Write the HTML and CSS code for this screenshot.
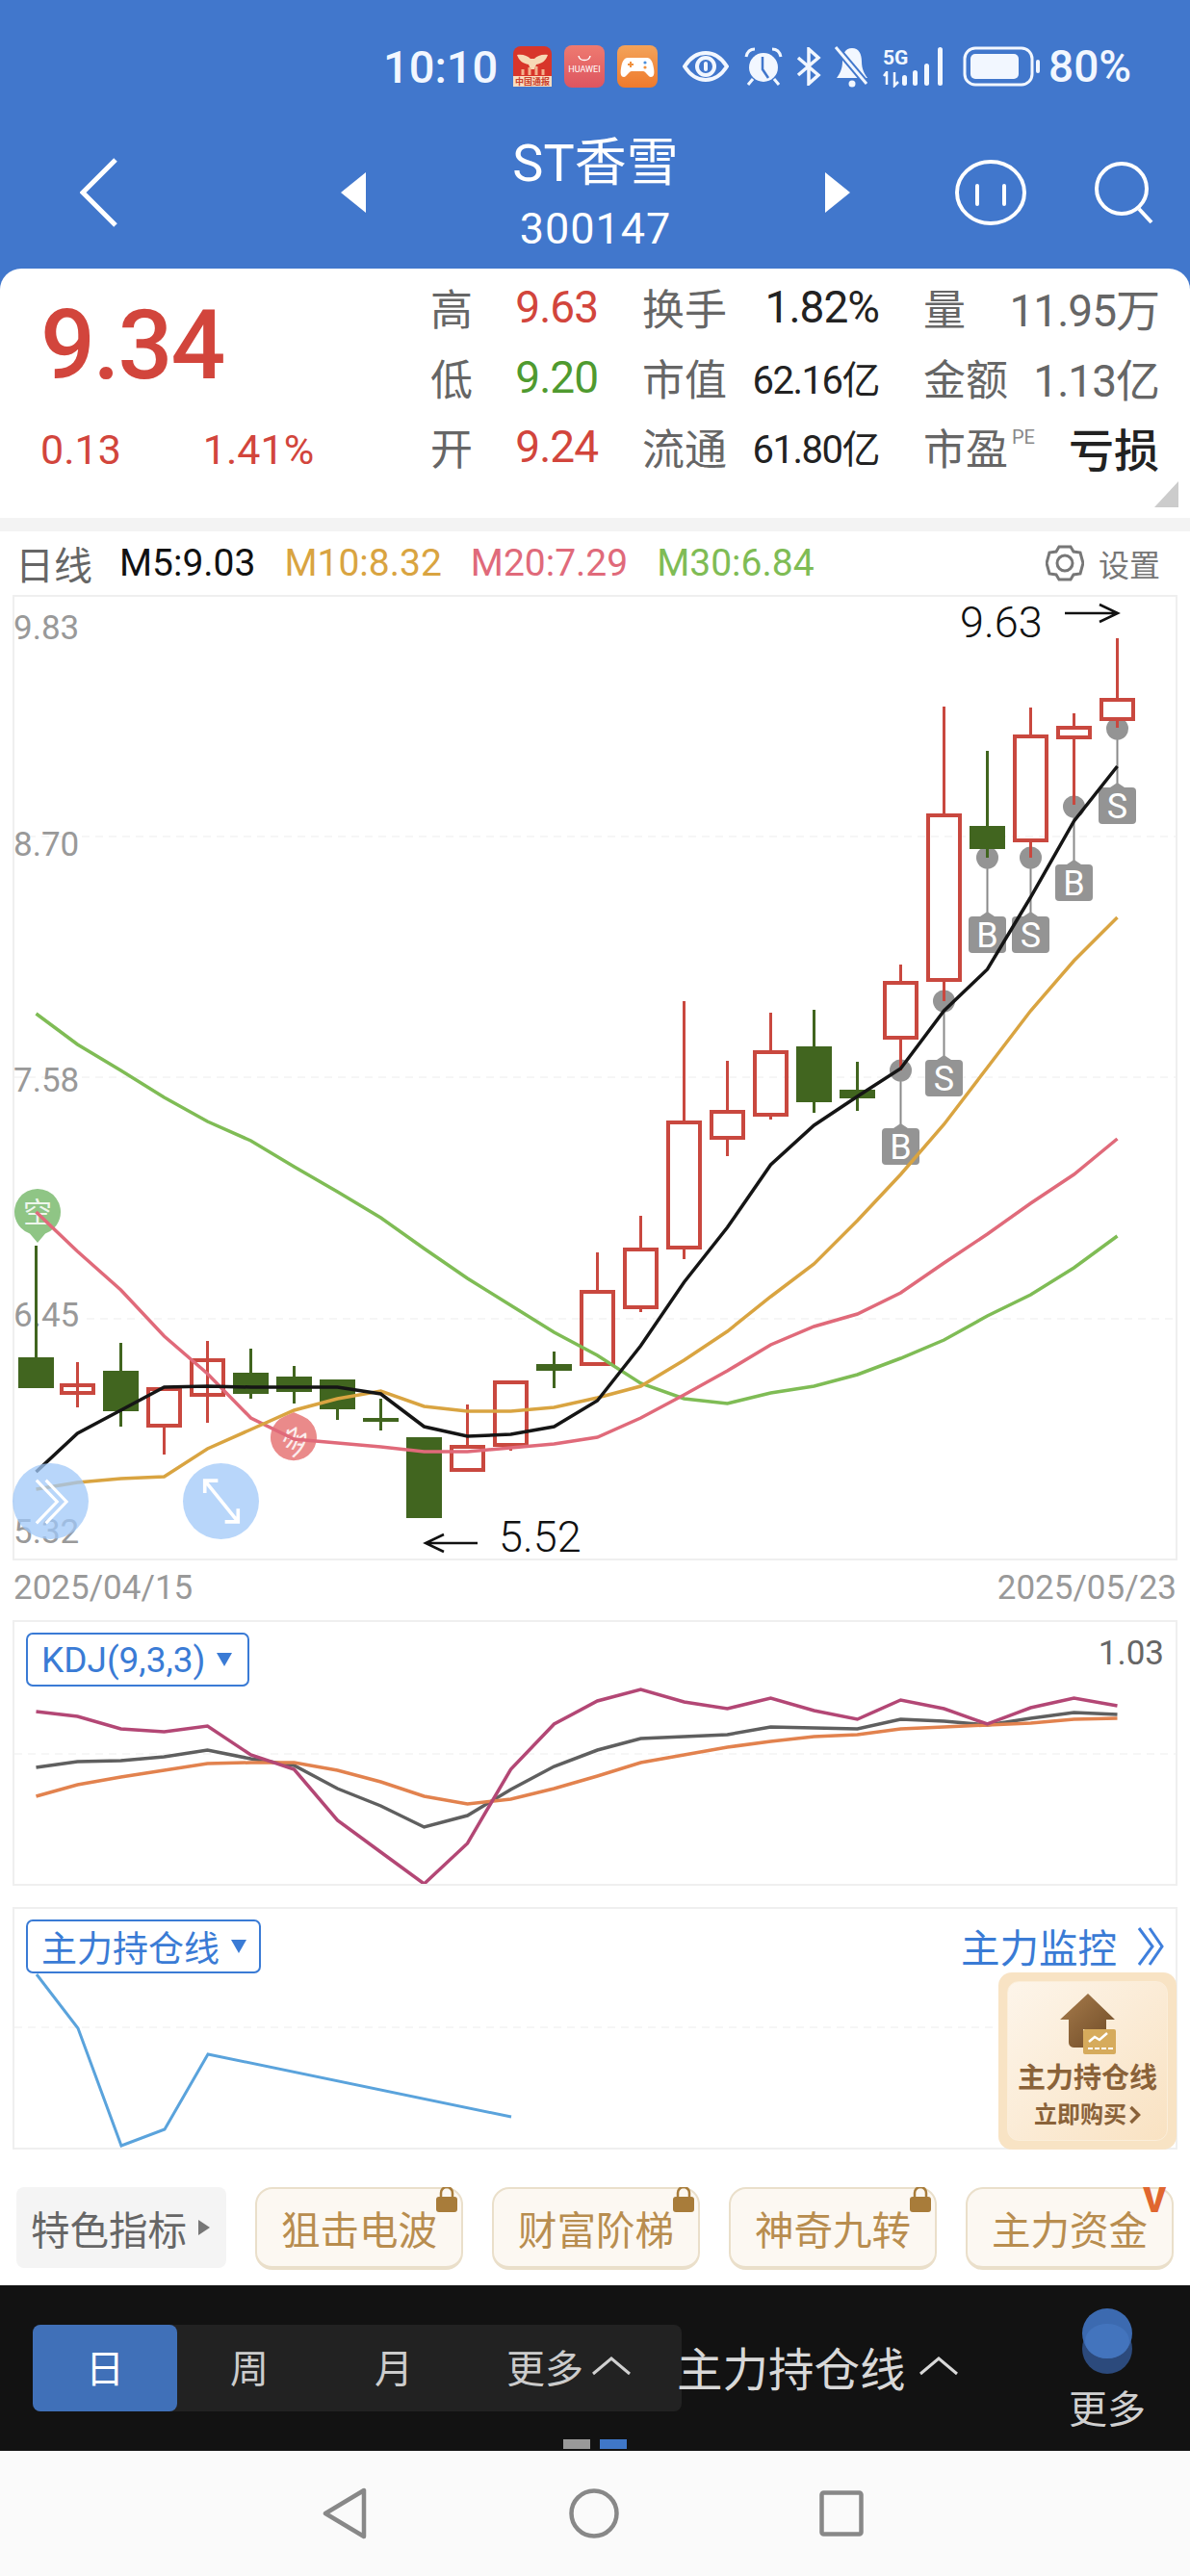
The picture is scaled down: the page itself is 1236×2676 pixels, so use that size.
FILE: index.html
```html
<!DOCTYPE html>
<html lang="zh-CN">
<head>
  <meta charset="UTF-8" />
  <meta name="viewport" content="width=device-width, initial-scale=1.0"/>
  <title>ST香雪 - 300147</title>
  <link rel="stylesheet" href="styles.css">
</head>
<body>
  <div class="top">
    <div class="status">
      <span class="clock">10:10</span>
      <svg class="app-red" viewBox="0 0 40 42">
        <rect width="40" height="42" rx="8" fill="#d8352a"/>
        <path d="M4 9c6-1 11 1 14 4h4c3-3 8-5 14-4-2 6-6 9-12 10l-2 5h-4l-2-5C10 18 6 15 4 9z" fill="#f7d9b5"/>
        <path d="M10 30v-6M17 30v-8M24 30v-9M31 30v-6" stroke="#f4b18c" stroke-width="3"/>
        <rect y="31" width="40" height="11" fill="#fbdcbf"/>
        <text class="app-tag" x="20" y="40">中国通报</text>
      </svg>
      <svg class="app-sq" viewBox="0 0 42 44">
        <defs><linearGradient id="hw" x1="0" y1="0" x2="0" y2="1"><stop offset="0" stop-color="#ee7a70"/><stop offset="1" stop-color="#dd5560"/></linearGradient></defs>
        <rect width="42" height="44" rx="8" fill="url(#hw)"/>
        <path d="M15 11c1 6 11 6 12 0" fill="none" stroke="#fff" stroke-width="1.5"/>
        <text class="app-hw" x="21" y="28">HUAWEI</text>
      </svg>
      <svg class="app-sq" viewBox="0 0 42 44">
        <defs><linearGradient id="gm" x1="0" y1="0" x2="0" y2="1"><stop offset="0" stop-color="#f3a35a"/><stop offset="1" stop-color="#ef7a2c"/></linearGradient></defs>
        <rect width="42" height="44" rx="8" fill="url(#gm)"/>
        <path d="M11 13h20c4 0 6 4 7 11 1 6 0 9-3 9-3 0-5-6-8-6H15c-3 0-5 6-8 6-3 0-4-3-3-9 1-7 3-11 7-11z" fill="#fff"/>
        <path d="M11 20h6M14 17v6" stroke="#f0913f" stroke-width="2"/>
        <circle cx="29" cy="18" r="1.6" fill="#4a8fdc"/><circle cx="29" cy="23" r="1.6" fill="#f0913f"/>
      </svg>
      <svg class="ic-eye" viewBox="0 0 48 32">
        <path d="M2 16C9 5 16 2 24 2s15 3 22 14c-7 11-14 14-22 14S9 27 2 16z" fill="none" stroke="#f2f7ff" stroke-width="4"/>
        <circle cx="24" cy="16" r="9" fill="none" stroke="#f2f7ff" stroke-width="4"/>
        <rect x="22" y="11" width="4" height="10" rx="2" fill="#f2f7ff"/>
      </svg>
      <svg class="ic-alarm" viewBox="0 0 40 40">
        <circle cx="20" cy="21" r="15" fill="#f2f7ff"/>
        <path d="M19 10v13l6 9" fill="none" stroke="#4177cc" stroke-width="2.5"/>
        <path d="M2 10C3 5 6 2 11 2M38 10c-1-5-4-8-9-8M9 33l-5 6M31 33l5 6" fill="none" stroke="#f2f7ff" stroke-width="3"/>
      </svg>
      <svg class="ic-bt" viewBox="0 0 28 40">
        <path d="M3 11L24 29 14 38V2l10 9L3 29" fill="none" stroke="#f2f7ff" stroke-width="3.5"/>
      </svg>
      <svg class="ic-bell" viewBox="0 0 38 44">
        <path d="M19 3c7 0 10 6 10 14 0 8 3 13 6 17H3c3-4 6-9 6-17C9 9 12 3 19 3z" fill="#f2f7ff"/>
        <path d="M2 2l32 38" stroke="#4177cc" stroke-width="7"/>
        <path d="M2 2l32 38" stroke="#f2f7ff" stroke-width="3"/>
        <circle cx="19" cy="40" r="3.5" fill="#f2f7ff"/>
      </svg>
      <svg class="ic-signal" viewBox="0 0 68 44">
        <text class="ic-5g" x="0" y="20">5G</text>
        <path d="M4 28l-3 4M4 27v14M12 28v14l4-4" fill="none" stroke="#f2f7ff" stroke-width="2.5"/>
        <rect x="20" y="31" width="5" height="11" rx="2.5" fill="#f2f7ff"/>
        <rect x="31" y="26" width="5" height="16" rx="2.5" fill="#f2f7ff"/>
        <rect x="43" y="19" width="5" height="23" rx="2.5" fill="#f2f7ff"/>
        <rect x="57" y="2" width="5" height="40" rx="2.5" fill="#f2f7ff"/>
      </svg>
      <svg class="ic-batt" viewBox="0 0 82 42">
        <rect x="2" y="2" width="70" height="38" rx="11" fill="none" stroke="#f2f7ff" stroke-width="3"/>
        <rect x="8" y="8" width="50" height="26" rx="5" fill="#f2f7ff"/>
        <rect x="76" y="14" width="4" height="14" rx="2" fill="#f2f7ff"/>
      </svg>
      <span class="batt-pct">80%</span>
    </div>

    <div class="nav">
      <svg class="nav-back" viewBox="0 0 40 72"><path d="M37 2L3 36l34 34" fill="none" stroke="#fff" stroke-width="5"/></svg>
      <svg class="nav-tri" viewBox="0 0 26 42"><path d="M26 0v42L0 21z" fill="#fff"/></svg>
      <div class="nav-title">
        <div class="nav-name">ST香雪</div>
        <div class="nav-code">300147</div>
      </div>
      <svg class="nav-tri" viewBox="0 0 26 42"><path d="M0 0v42l26-21z" fill="#fff"/></svg>
      <svg class="nav-face" viewBox="0 0 74 68">
        <ellipse cx="37" cy="34" rx="35" ry="32" fill="none" stroke="#fff" stroke-width="4"/>
        <path d="M23 27v19M51 27v19" stroke="#fff" stroke-width="4" stroke-linecap="round"/>
      </svg>
      <svg class="nav-search" viewBox="0 0 64 66">
        <circle cx="29" cy="29" r="26" fill="none" stroke="#fff" stroke-width="4"/>
        <path d="M47 50l13 14" stroke="#fff" stroke-width="4"/>
      </svg>
    </div>

    <div class="quote">
      <div class="quote-main">
        <div class="price">9.34</div>
        <div class="price-sub"><span>0.13</span><span>1.41%</span></div>
      </div>
      <div class="stats">
        <span class="lab">高</span><span class="val red">9.63</span>
        <span class="lab mid">换手</span><span class="val">1.82%</span>
        <span class="lab mid">量</span><span class="val dim">11.95万</span>

        <span class="lab">低</span><span class="val green">9.20</span>
        <span class="lab mid">市值</span><span class="val small">62.16亿</span>
        <span class="lab mid">金额</span><span class="val dim">1.13亿</span>

        <span class="lab">开</span><span class="val red">9.24</span>
        <span class="lab mid">流通</span><span class="val small">61.80亿</span>
        <span class="lab mid">市盈<sup class="pe">PE</sup></span><span class="val loss">亏损</span>
      </div>
      <div class="corner"></div>
    </div>
  </div>

  <div class="ma-row">
    <span class="ma-title">日线</span>
    <span class="ma m5">M5:9.03</span>
    <span class="ma m10">M10:8.32</span>
    <span class="ma m20">M20:7.29</span>
    <span class="ma m30">M30:6.84</span>
    <span class="ma-set">
      <svg viewBox="0 0 40 40"><path d="M14 3h12l3 5 7 1 3 11-3 11-7 1-3 5H14l-3-5-7-1-3-11 3-11 7-1z" fill="none" stroke="#777" stroke-width="3"/><circle cx="20" cy="20" r="8" fill="none" stroke="#777" stroke-width="3"/></svg>
      设置
    </span>
  </div>

  <div class="kline">
    <svg class="kline-svg" viewBox="15 620 1206 999">
      <path class="grid-line" d="M15 869H1221M15 1119H1221M90 1370H1221"/>

      <text class="axis" x="14" y="664">9.83</text>
      <text class="axis" x="14" y="889">8.70</text>
      <text class="axis" x="14" y="1134">7.58</text>
      <text class="axis" x="14" y="1378">6.45</text>

      <!-- buy / sell marks -->
      <g class="mark">
        <path class="mark-line" d="M935.5 1112V1172M980.5 1040V1101M1025.5 891V952M1070.5 891V952M1115.5 838V898M1160.5 757V818"/>
        <circle cx="935.5" cy="1112" r="11.5"/><circle cx="980.5" cy="1040" r="11.5"/><circle cx="1025.5" cy="891" r="11.5"/>
        <circle cx="1070.5" cy="891" r="11.5"/><circle cx="1115.5" cy="838" r="11.5"/><circle cx="1160.5" cy="757" r="11.5"/>
        <path d="M928 1172l7.500-5 7.500 5zM973 1101l7.500-5 7.500 5zM1018 952l7.500-5 7.500 5zM1063 952l7.500-5 7.500 5zM1108 898l7.500-5 7.500 5zM1153 818l7.500-5 7.500 5z"/>
        <rect x="916" y="1172" width="39" height="38" rx="4"/><rect x="961" y="1101" width="39" height="38" rx="4"/>
        <rect x="1006" y="952" width="39" height="38" rx="4"/><rect x="1051" y="952" width="39" height="38" rx="4"/>
        <rect x="1096" y="898" width="39" height="38" rx="4"/><rect x="1141" y="818" width="39" height="38" rx="4"/>
      </g>
      <text class="mark-text" x="935.500" y="1204">B</text>
      <text class="mark-text" x="980.500" y="1133">S</text>
      <text class="mark-text" x="1025.500" y="984">B</text>
      <text class="mark-text" x="1070.500" y="984">S</text>
      <text class="mark-text" x="1115.500" y="930">B</text>
      <text class="mark-text" x="1160.500" y="850">S</text>

      <!-- candles going down -->
      <g class="fall">
        <path d="M37.500 1294V1410M125.500 1395V1482M260.500 1401V1453M305.500 1419V1458M350.500 1433V1475M395.500 1453V1486M575.500 1404V1442M845.500 1049V1156M890.500 1103V1154M1025.500 780V891"/>
        <rect x="19" y="1410" width="37" height="32"/>
        <rect x="107" y="1424" width="37" height="42"/>
        <rect x="242" y="1426" width="37" height="22"/>
        <rect x="287" y="1430" width="37" height="16"/>
        <rect x="332" y="1433" width="37" height="31"/>
        <rect x="377" y="1473" width="37" height="4"/>
        <rect x="422" y="1493" width="37" height="84"/>
        <rect x="557" y="1417" width="37" height="7"/>
        <rect x="827" y="1087" width="37" height="58"/>
        <rect x="872" y="1132" width="37" height="9"/>
        <rect x="1007" y="858" width="37" height="24"/>
      </g>

      <!-- candles going up -->
      <g class="rise">
        <path d="M80.500 1415V1462M170.500 1482V1511M215.500 1393V1478M485.500 1459V1503M530.500 1500V1507M620.500 1301V1340M665.500 1263V1296M665.500 1358V1363M710.500 1040V1164M710.500 1296V1308M755.500 1102V1153M755.500 1182V1201M800.500 1052V1091M800.500 1158V1163M935.500 1002V1019M935.500 1078V1112M980.500 734V845M980.500 1018V1040M1070.500 735V763M1070.500 873V891M1115.500 741V754M1115.500 766V836M1160.500 663V725M1160.500 747V756"/>
        <rect x="64" y="1439" width="33" height="8"/>
        <rect x="154" y="1443" width="33" height="38"/>
        <rect x="199" y="1413" width="33" height="36"/>
        <rect x="469" y="1503" width="33" height="24"/>
        <rect x="514" y="1436" width="33" height="65"/>
        <rect x="604" y="1342" width="33" height="75"/>
        <rect x="649" y="1298" width="33" height="60"/>
        <rect x="694" y="1166" width="33" height="130"/>
        <rect x="739" y="1155" width="33" height="27"/>
        <rect x="784" y="1093" width="33" height="65"/>
        <rect x="919" y="1021" width="33" height="57"/>
        <rect x="964" y="847" width="33" height="171"/>
        <rect x="1054" y="765" width="33" height="108"/>
        <rect x="1099" y="756" width="33" height="10"/>
        <rect x="1144" y="727" width="33" height="20"/>
      </g>

      <!-- signal pins -->
      <path class="pin-short" d="M39 1291l-8-9.400a24 24 0 1 1 16 0z"/>
      <text class="pin-text" x="39" y="1270">空</text>
      <path class="pin-long" d="M305 1467l9 4a24 24 0 1 1-18 0z"/>
      <text class="pin-text" x="305" y="1508" transform="rotate(-35 305 1493)">多</text>

      <polyline class="ma-line l30" points="37.500,1053 80.500,1085 125.500,1112 170.500,1140 215.500,1165 260.500,1185 305.500,1212 350.500,1238 395.500,1265 440.500,1297 485.500,1328 530.500,1356 575.500,1384 620.500,1408 665.500,1437 710.500,1453 755.500,1458 800.500,1447 845.500,1440 890.500,1428 935.500,1411 980.500,1392 1025.500,1367 1070.500,1345 1115.500,1317 1160.500,1284"/>
      <polyline class="ma-line l20" points="37.500,1259 80.500,1300 125.500,1340 170.500,1388 215.500,1427 260.500,1473 305.500,1495 350.500,1499 395.500,1503 440.500,1508 485.500,1508 530.500,1504 575.500,1500 620.500,1493 665.500,1473 710.500,1449 755.500,1424 800.500,1397 845.500,1378 890.500,1365 935.500,1343 980.500,1312 1025.500,1282 1070.500,1250 1115.500,1220 1160.500,1183"/>
      <polyline class="ma-line l10" points="37.500,1547 80.500,1540 125.500,1536 170.500,1534 215.500,1505 260.500,1485 305.500,1465 350.500,1453 395.500,1445 440.500,1461 485.500,1466 530.500,1466 575.500,1462 620.500,1452 665.500,1440 710.500,1413 755.500,1383 800.500,1347 845.500,1313 890.500,1268 935.500,1220 980.500,1168 1025.500,1109 1070.500,1050 1115.500,998 1160.500,953"/>
      <polyline class="ma-line l5" points="37.500,1529 80.500,1489 125.500,1465 170.500,1441 215.500,1440 260.500,1441 305.500,1441 350.500,1441 395.500,1448 440.500,1482 485.500,1492 530.500,1490 575.500,1482 620.500,1455 665.500,1398 710.500,1332 755.500,1275 800.500,1210 845.500,1169 890.500,1139 935.500,1110 980.500,1050 1025.500,1007 1070.500,932 1115.500,853 1160.500,796"/>

      <text class="peak" x="997" y="662">9.63</text>
      <path class="peak-arrow" d="M1106 637H1160M1142 628l19 9-19 9"/>
      <path class="peak-arrow" d="M496 1603H442M461 1594l-19 9 19 9"/>
      <text class="peak" x="518" y="1612">5.52</text>

      <text class="axis" x="14" y="1603">5.32</text>
    </svg>
    <div class="float-btn btn-left">
      <svg viewBox="0 0 40 56"><path d="M3 3l24 25L3 53M14 3l24 25-24 25" fill="none" stroke="#fff" stroke-width="3.500"/></svg>
    </div>
    <div class="float-btn btn-right">
      <svg viewBox="0 0 44 52"><path d="M3 2l38 47M3 16V2h15M41 34v15H26" fill="none" stroke="#fff" stroke-width="4"/></svg>
    </div>
  </div>

  <div class="dates"><span>2025/04/15</span><span>2025/05/23</span></div>

  <div class="panel panel-kdj">
    <svg class="panel-svg" viewBox="15 1685 1206 272">
      <path class="grid-line" d="M15 1822H1221"/>
      <polyline class="kdj l-k" points="37.500,1836 80.500,1830 125.500,1829 170.500,1825 215.500,1818 260.500,1827 305.500,1834 350.500,1858 395.500,1876 440.500,1898 485.500,1886 530.500,1859 575.500,1835 620.500,1818 665.500,1806 710.500,1804 755.500,1802 800.500,1794 845.500,1795 890.500,1796 935.500,1786 980.500,1788 1025.500,1792 1070.500,1785 1115.500,1779 1160.500,1781"/>
      <polyline class="kdj l-d" points="37.500,1866 80.500,1854 125.500,1846 170.500,1839 215.500,1832 260.500,1831 305.500,1831 350.500,1839 395.500,1851 440.500,1866 485.500,1874 530.500,1869 575.500,1858 620.500,1845 665.500,1831 710.500,1823 755.500,1815 800.500,1809 845.500,1804 890.500,1802 935.500,1796 980.500,1794 1025.500,1792 1070.500,1790 1115.500,1786 1160.500,1785"/>
      <polyline class="kdj l-j" points="37.500,1778 80.500,1783 125.500,1796 170.500,1799 215.500,1793 260.500,1823 305.500,1838 350.500,1891 395.500,1924 440.500,1957 485.500,1915 530.500,1838 575.500,1791 620.500,1767 665.500,1755 710.500,1768 755.500,1775 800.500,1764 845.500,1777 890.500,1786 935.500,1766 980.500,1775 1025.500,1791 1070.500,1774 1115.500,1764 1160.500,1772"/>
    </svg>
    <div class="pick pick-kdj">KDJ(9,3,3)<i class="pick-tri"></i></div>
    <div class="panel-val">1.03</div>
  </div>

  <div class="panel panel-hold">
    <svg class="panel-svg" viewBox="15 1983 1206 248">
      <path class="grid-line" d="M15 2106H1040"/>
      <polyline class="hold-line" points="38,2051 81,2107 126,2229 171,2212 216,2134 531,2199"/>
    </svg>
    <div class="pick pick-hold">主力持仓线<i class="pick-tri"></i></div>
    <div class="hold-link">主力监控
      <svg viewBox="0 0 30 44"><path d="M3 3l14 19L3 41M14 3l13 19-13 19" fill="none" stroke="#3f7fdc" stroke-width="3"/></svg>
    </div>
    <div class="promo">
      <div class="promo-in">
        <svg class="promo-house" viewBox="0 0 58 64">
          <defs><linearGradient id="hs" x1="0" y1="0" x2="1" y2="1"><stop offset="0" stop-color="#a87c4c"/><stop offset="1" stop-color="#6d4a26"/></linearGradient></defs>
          <path d="M29 0l28 27H48v10H24v19h-8c-5 0-7-2-7-6V27H0z" fill="url(#hs)"/>
          <rect x="24" y="37" width="34" height="26" rx="2" fill="#d6ab5c"/>
          <path d="M30 50l6-5 5 3 8-7" fill="none" stroke="#fff" stroke-width="2.500"/>
          <path d="M29 57h26" stroke="#fff" stroke-width="2" stroke-dasharray="5 2"/>
        </svg>
        <div class="promo-title">主力持仓线</div>
        <div class="promo-buy">立即购买 <svg viewBox="0 0 12 20"><path d="M2 2l8 8-8 8" fill="none" stroke="#8a6239" stroke-width="3.500"/></svg></div>
      </div>
    </div>
  </div>

  <div class="chips">
    <div class="chip-head">特色指标<i class="head-tri"></i></div>
    <div class="chip">狙击电波
      <svg class="lock" viewBox="0 0 22 26"><path d="M5 12V6a6 6 0 0 1 12 0v6" fill="none" stroke="#a87c3a" stroke-width="2.500"/><rect y="10" width="22" height="16" rx="3" fill="#a87c3a"/></svg>
    </div>
    <div class="chip">财富阶梯
      <svg class="lock" viewBox="0 0 22 26"><path d="M5 12V6a6 6 0 0 1 12 0v6" fill="none" stroke="#a87c3a" stroke-width="2.500"/><rect y="10" width="22" height="16" rx="3" fill="#a87c3a"/></svg>
    </div>
    <div class="chip">神奇九转
      <svg class="lock" viewBox="0 0 22 26"><path d="M5 12V6a6 6 0 0 1 12 0v6" fill="none" stroke="#a87c3a" stroke-width="2.500"/><rect y="10" width="22" height="16" rx="3" fill="#a87c3a"/></svg>
    </div>
    <div class="chip">主力资金<span class="vip">V</span></div>
  </div>

  <div class="bar">
    <div class="tabs">
      <span class="tab active">日</span>
      <span class="tab">周</span>
      <span class="tab">月</span>
      <span class="tab tab-more">更多
        <svg viewBox="0 0 42 20"><path d="M2 18L21 2l19 16" fill="none" stroke="#d0d0d0" stroke-width="3"/></svg>
      </span>
    </div>
    <div class="bar-hold">主力持仓线
      <svg viewBox="0 0 42 20"><path d="M2 18L21 2l19 16" fill="none" stroke="#d8d8d8" stroke-width="3"/></svg>
    </div>
    <div class="bar-more">
      <svg viewBox="0 0 52 68">
        <circle cx="26" cy="42" r="26" fill="#2c4a7c"/>
        <circle cx="26" cy="26" r="26" fill="#3c6ab0"/>
        <ellipse cx="26" cy="34" rx="23" ry="18" fill="#4374bd"/>
      </svg>
      <span>更多</span>
    </div>
    <div class="dots"><i></i><i class="on"></i></div>
  </div>

  <div class="sysnav">
    <svg class="sys-back" viewBox="0 0 46 54"><path d="M43 3v48L3 27z" fill="none" stroke="#888" stroke-width="4.500" stroke-linejoin="round"/></svg>
    <svg class="sys-home" viewBox="0 0 52 52"><circle cx="26" cy="26" r="23.500" fill="none" stroke="#888" stroke-width="4.500"/></svg>
    <svg class="sys-rect" viewBox="0 0 46 48"><rect x="2.500" y="2.500" width="41" height="43" rx="2" fill="none" stroke="#888" stroke-width="4.500"/></svg>
  </div>
</body>
</html>
```

FILE: styles.css
```css
* {
  box-sizing: border-box;
}
html, body {
  margin: 0;
  padding: 0;
}
body {
  width: 1236px;
  height: 2676px;
  overflow: hidden;
  background: #fff;
  color: #222;
  font-family: Roboto, "Noto Sans CJK SC", sans-serif;
}
svg {
  display: block;
  flex: none;
}

/* blue header */
.top {
  background: #4177cc;
}
.status {
  height: 134px;
  display: flex;
  align-items: center;
  padding: 4px 0 0 398px;
  color: #f2f7ff;
}
.clock {
  font-size: 47px;
  font-weight: 500;
  width: 135px;
}
.app-red {
  width: 40px;
  height: 42px;
  margin-right: 13px;
}
.app-sq {
  width: 42px;
  height: 44px;
  margin-right: 13px;
}
.app-sq + .app-sq {
  margin-right: 26px;
}
.app-tag {
  font-size: 9px;
  fill: #c8402c;
  text-anchor: middle;
  font-weight: 700;
}
.app-hw {
  font-size: 9px;
  fill: #fff;
  text-anchor: middle;
  font-family: Roboto, sans-serif;
}
.ic-eye {
  width: 48px;
  height: 32px;
  margin-right: 16px;
}
.ic-alarm {
  width: 40px;
  height: 40px;
  margin-right: 13px;
}
.ic-bt {
  width: 28px;
  height: 40px;
  margin-right: 12px;
}
.ic-bell {
  width: 38px;
  height: 44px;
  margin-right: 13px;
}
.ic-signal {
  width: 68px;
  height: 44px;
  margin-right: 15px;
}
.ic-5g {
  font-size: 21px;
  font-weight: 700;
  fill: #f2f7ff;
}
.ic-batt {
  width: 82px;
  height: 42px;
  margin-right: 7px;
}
.batt-pct {
  font-size: 46px;
  font-weight: 500;
}

.nav {
  height: 145px;
  display: flex;
  align-items: center;
  padding-bottom: 14px;
  color: #fff;
}
.nav-back {
  width: 40px;
  height: 72px;
  margin-left: 83px;
  margin-right: 231px;
}
.nav-tri {
  width: 26px;
  height: 42px;
}
.nav-title {
  width: 477px;
  text-align: center;
}
.nav-name {
  font-size: 54px;
  line-height: 66px;
}
.nav-code {
  font-size: 45px;
  line-height: 60px;
  letter-spacing: 1px;
  padding-top: 5px;
  margin-bottom: -5px;
}
.nav-face {
  width: 74px;
  height: 68px;
  margin-left: 109px;
}
.nav-search {
  width: 64px;
  height: 66px;
  margin-left: 70px;
}

.quote {
  position: relative;
  height: 259px;
  display: flex;
  padding-top: 7px;
  background: #fff;
  border-radius: 22px 22px 0 0;
}
.quote-main {
  width: 447px;
  padding-left: 42px;
  color: #d2453c;
}
.price {
  height: 145px;
  line-height: 145px;
  font-size: 100px;
  font-weight: 500;
  letter-spacing: -2px;
}
.price-sub {
  height: 72px;
  line-height: 72px;
  font-size: 43px;
  display: flex;
  gap: 85px;
}
.stats {
  display: grid;
  grid-template-columns: 46px 128px 139px 153px 137px 154px;
  grid-auto-rows: 72.5px;
  align-items: center;
  align-content: start;
  margin-top: -3px;
}
.lab {
  font-size: 44px;
  color: #666;
  white-space: nowrap;
}
.lab.mid {
  padding-left: 46px;
}
.val {
  font-size: 46px;
  letter-spacing: -1px;
  justify-self: end;
  white-space: nowrap;
}
.val.small {
  font-size: 40px;
  letter-spacing: -1.5px;
}
.val.dim {
  color: #666;
}
.val.loss {
  font-size: 47px;
  letter-spacing: 0;
  font-weight: 500;
}
.red {
  color: #d2453c;
}
.green {
  color: #4f9a2f;
}
.pe {
  font-size: 20px;
  color: #888;
  vertical-align: 22px;
  line-height: 0;
  margin-left: 4px;
}
.corner {
  position: absolute;
  right: 12px;
  bottom: 11px;
  width: 25px;
  height: 27px;
  background: #ccc;
  clip-path: polygon(100% 0, 100% 100%, 0 100%);
}

/* moving average row */
.ma-row {
  height: 80px;
  padding: 0 31px 0 16px;
  border-top: 14px solid #f3f3f3;
  display: flex;
  align-items: center;
  font-size: 39px;
}
.ma-title {
  color: #666;
  font-size: 40px;
  margin-right: 28px;
}
.ma {
  margin-right: 30px;
  white-space: nowrap;
}
.m5 {
  color: #111;
}
.m10 {
  color: #d9a441;
}
.m20 {
  color: #e06a7a;
}
.m30 {
  color: #7fbc55;
}
.ma-set {
  margin-left: auto;
  display: flex;
  align-items: center;
  gap: 15px;
  font-size: 32px;
  color: #777;
}
.ma-set svg {
  width: 40px;
  height: 40px;
}

/* candle chart */
.kline {
  position: relative;
  margin: 0 13px;
  height: 1003px;
  border: 2px solid #efefef;
}
.kline-svg {
  width: 1206px;
  height: 999px;
  overflow: visible;
}
.grid-line {
  fill: none;
  stroke: #f3f3f3;
  stroke-width: 1.5;
  stroke-dasharray: 8 6;
}
.axis {
  font-size: 35px;
  fill: #999;
}
.mark {
  fill: #949494;
}
.mark-line {
  fill: none;
  stroke: #8a8a8a;
  stroke-width: 2;
}
.mark-text {
  font-size: 36px;
  fill: #fff;
  text-anchor: middle;
}
.fall {
  fill: #41651f;
}
.fall path {
  fill: none;
  stroke: #41651f;
  stroke-width: 3;
}
.rise {
  fill: none;
  stroke: #c9483f;
  stroke-width: 4;
}
.rise path {
  stroke-width: 3;
}
.pin-short {
  fill: #8fc585;
}
.pin-long {
  fill: #ea8a8a;
}
.pin-text {
  font-size: 30px;
  fill: #fff;
  text-anchor: middle;
  opacity: 0.85;
}
.ma-line {
  fill: none;
  stroke-width: 3.5;
}
.l5 {
  stroke: #151515;
}
.l10 {
  stroke: #d9a441;
}
.l20 {
  stroke: #e06a7a;
}
.l30 {
  stroke: #7fbc55;
}
.peak {
  font-size: 45px;
  font-weight: 300;
  fill: #111;
}
.peak-arrow {
  fill: none;
  stroke: #111;
  stroke-width: 2.5;
}
.float-btn {
  position: absolute;
  top: 900px;
  width: 79px;
  height: 79px;
  border-radius: 50%;
  background: rgba(160, 200, 248, 0.75);
  display: flex;
  align-items: center;
  justify-content: center;
}
.btn-left {
  left: -2px;
}
.btn-right {
  left: 175px;
}
.btn-left svg {
  width: 36px;
  height: 50px;
}
.btn-right svg {
  width: 40px;
  height: 48px;
}

.dates {
  height: 62px;
  padding: 0 14px 6px;
  display: flex;
  justify-content: space-between;
  align-items: center;
  font-size: 35px;
  color: #999;
}

/* indicator panels */
.panel {
  position: relative;
  margin: 0 13px;
  border: 2px solid #efefef;
}
.panel-kdj {
  height: 276px;
}
.panel-hold {
  height: 252px;
  margin-top: 22px;
}
.panel-svg {
  width: 1206px;
  height: 100%;
}
.kdj {
  fill: none;
  stroke-width: 3.5;
}
.l-k {
  stroke: #5f5f5f;
}
.l-d {
  stroke: #e2824e;
}
.l-j {
  stroke: #b34775;
}
.hold-line {
  fill: none;
  stroke: #5aa3dc;
  stroke-width: 3;
}
.pick {
  position: absolute;
  left: 12px;
  top: 11px;
  height: 56px;
  padding-left: 14px;
  display: flex;
  align-items: center;
  background: #fff;
  border: 2px solid #3a7bd5;
  border-radius: 7px;
  color: #3a7bd5;
  font-size: 37px;
}
.pick-kdj {
  width: 232px;
}
.pick-hold {
  width: 244px;
}
.pick-tri {
  width: 0;
  height: 0;
  margin-left: 12px;
  border-left: 8px solid transparent;
  border-right: 8px solid transparent;
  border-top: 14px solid #3a7bd5;
}
.panel-val {
  position: absolute;
  right: 12px;
  top: 12px;
  font-size: 35px;
  color: #666;
}
.hold-link {
  position: absolute;
  right: 11px;
  top: 9px;
  display: flex;
  align-items: center;
  gap: 20px;
  color: #3a7bd5;
  font-size: 40.5px;
}
.hold-link svg {
  width: 30px;
  height: 44px;
}
.promo {
  position: absolute;
  right: -1px;
  top: 66px;
  width: 185px;
  height: 184px;
  padding: 9px;
  background: #f8e3c4;
  border-radius: 14px;
}
.promo-in {
  height: 100%;
  padding-top: 12px;
  border-radius: 12px;
  background: linear-gradient(135deg, #fdf5ea, #f9e2c2);
  border: 1px solid #fbeeda;
  display: flex;
  flex-direction: column;
  align-items: center;
  color: #8a6239;
  font-weight: 700;
}
.promo-house {
  width: 58px;
  height: 64px;
}
.promo-title {
  font-size: 29px;
  line-height: 44px;
  margin-top: 2px;
}
.promo-buy {
  font-size: 24px;
  line-height: 32px;
  display: flex;
  align-items: center;
  gap: 2px;
}
.promo-buy svg {
  width: 13px;
  height: 20px;
}

/* feature chips */
.chips {
  height: 141px;
  padding: 39px 0 0 17px;
  display: flex;
  gap: 30px;
  align-items: flex-start;
}
.chip-head {
  width: 218px;
  height: 84px;
  padding-left: 15px;
  display: flex;
  align-items: center;
  background: #f4f4f4;
  border-radius: 8px;
  color: #666;
  font-size: 40.5px;
}
.head-tri {
  margin-left: 12px;
  border-top: 8px solid transparent;
  border-bottom: 8px solid transparent;
  border-left: 12px solid #777;
}
.chip {
  position: relative;
  width: 216px;
  height: 86px;
  display: flex;
  align-items: center;
  justify-content: center;
  background: #fcf8f2;
  border: 2px solid #eadfca;
  border-bottom-width: 4px;
  border-radius: 18px;
  color: #b88d4f;
  font-size: 40.5px;
}
.lock {
  position: absolute;
  right: 4px;
  top: -2px;
  width: 22px;
  height: 26px;
}
.vip {
  position: absolute;
  right: 6px;
  top: -6px;
  font-size: 36px;
  font-weight: 900;
  line-height: 36px;
  color: #e0662f;
}

/* dark period bar */
.bar {
  position: relative;
  height: 172px;
  padding: 41px 0 0 34px;
  display: flex;
  background: #121212;
  color: #ccc;
}
.tabs {
  width: 674px;
  height: 90px;
  display: flex;
  align-items: center;
  background: #222;
  border-radius: 8px;
  font-size: 40px;
}
.tab {
  width: 150px;
  height: 100%;
  padding-bottom: 4px;
  display: flex;
  align-items: center;
  justify-content: center;
  gap: 8px;
}
.tab.active {
  background: #4070b8;
  color: #fff;
  border-radius: 8px;
}
.tab-more {
  width: 224px;
  padding-right: 10px;
}
.tab-more svg {
  width: 42px;
  height: 20px;
}
.bar-hold {
  margin-left: -5px;
  height: 90px;
  padding-bottom: 4px;
  display: flex;
  align-items: center;
  gap: 13px;
  font-size: 47.500px;
  color: #d8d8d8;
  white-space: nowrap;
}
.bar-hold svg {
  width: 42px;
  height: 20px;
}
.bar-more {
  position: absolute;
  left: 1110px;
  top: 24px;
  width: 80px;
  display: flex;
  flex-direction: column;
  align-items: center;
  font-size: 40px;
  color: #d0d0d0;
}
.bar-more svg {
  width: 52px;
  height: 68px;
}
.bar-more span {
  line-height: 60px;
  margin-top: 8px;
}
.dots {
  position: absolute;
  left: 585px;
  bottom: 2px;
  display: flex;
  gap: 10px;
}
.dots i {
  width: 28px;
  height: 10px;
  background: #999;
}
.dots i.on {
  background: #3f77c8;
}

/* android nav */
.sysnav {
  height: 130px;
  display: flex;
  align-items: center;
  padding: 0 0 0 335px;
  background: #fafafa;
}
.sys-back {
  width: 46px;
  height: 54px;
}
.sys-home {
  width: 52px;
  height: 52px;
  margin-left: 210px;
}
.sys-rect {
  width: 46px;
  height: 48px;
  margin-left: 208px;
}
```
